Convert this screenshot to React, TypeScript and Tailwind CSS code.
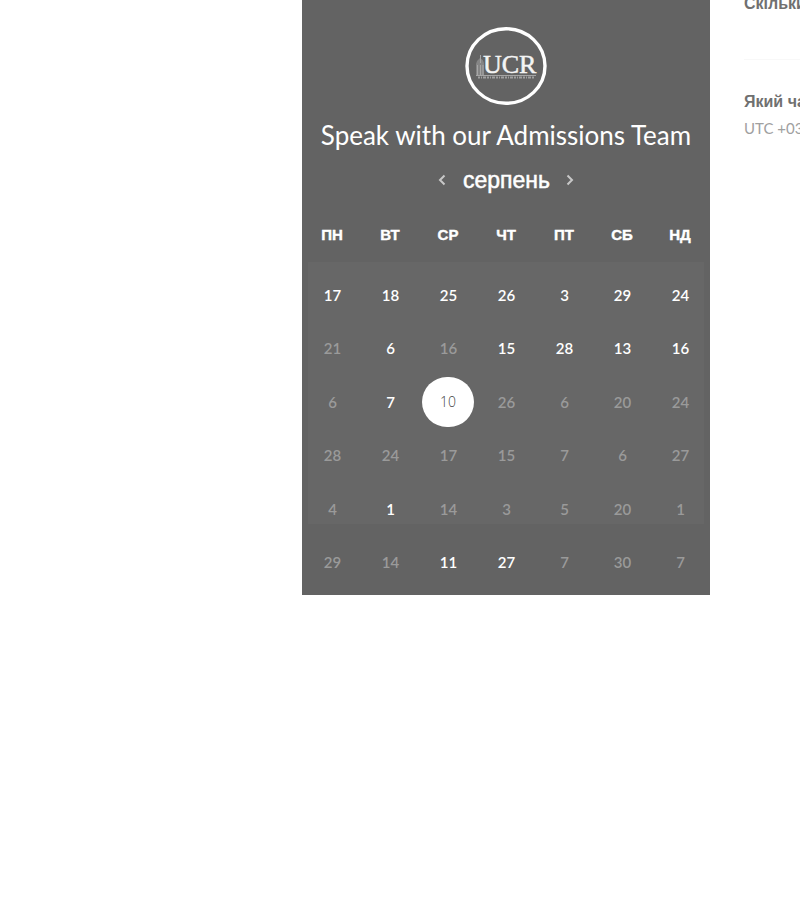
import React from "react";

type Day = { day: number; open?: boolean; selected?: boolean };

const on = (day: number): Day => ({ day, open: true });
const off = (day: number): Day => ({ day });

const weekdays = ["ПН", "ВТ", "СР", "ЧТ", "ПТ", "СБ", "НД"];

const weeks: Day[][] = [
  [on(17), on(18), on(25), on(26), on(3), on(29), on(24)],
  [off(21), on(6), off(16), on(15), on(28), on(13), on(16)],
  [off(6), on(7), { day: 10, selected: true }, off(26), off(6), off(20), off(24)],
  [off(28), off(24), off(17), off(15), off(7), off(6), off(27)],
  [off(4), on(1), off(14), off(3), off(5), off(20), off(1)],
  [off(29), off(14), on(11), on(27), off(7), off(30), off(7)],
];

function Logo() {
  return (
    <svg viewBox="0 0 82 78" className="h-[78px] w-[82px]" role="img" aria-label="UCR">
      <ellipse cx="41" cy="39" rx="39" ry="37.3" fill="none" stroke="#fff" strokeWidth="3.4" />
      <path d="M11 49V37q1-4 4-6 4 2 4 6v12z" fill="#858585" />
      <path d="M15.500 28v8M12.500 38v11M15.500 38v11M18 38v11" fill="none" stroke="#a6a6a6" />
      <text x="18" y="46" fontSize="26" fill="#f4f4f4" stroke="#f4f4f4" strokeWidth="0.5" fontFamily="Liberation Serif, serif">
        UCR
      </text>
      <path d="M11 48.500h60" stroke="#a5a5a5" />
      <path d="M13 50.500h57" stroke="#a0a0a0" strokeWidth="2" strokeDasharray="2 1 1 1 3 1" />
    </svg>
  );
}

function Chevron({ d }: { d: string }) {
  return (
    <svg viewBox="0 0 8 12" className="h-3 w-2" fill="none" stroke="#c8c8c8" strokeWidth="2" aria-hidden="true">
      <path d={d} />
    </svg>
  );
}

function DayButton({ day, open, selected }: Day) {
  if (selected) {
    return (
      <button
        aria-pressed="true"
        className="mx-auto block h-[50px] w-[52px] rounded-full bg-white font-['Open_Sans',sans-serif] text-sm font-light text-[#444]"
      >
        {day}
      </button>
    );
  }
  return (
    <button
      disabled={!open}
      className={
        open
          ? "mx-auto block h-[50px] w-[52px] pl-px font-semibold text-white"
          : "mx-auto block h-[50px] w-[52px] pl-px font-semibold text-[#9a9a9a]"
      }
    >
      {day}
    </button>
  );
}

export default function App() {
  return (
    <main className="grid min-h-screen grid-cols-[1fr_408px_90px] items-start overflow-hidden bg-white font-['Lato',sans-serif]">
      <section className="col-start-2 flex flex-col items-center bg-[#636363] px-px pt-[27px] pb-[6px] text-white">
        <Logo />
        <h1 className="mt-3 text-[26px] leading-9 whitespace-nowrap">Speak with our Admissions Team</h1>
        <div className="mt-3 flex h-[30px] items-center gap-4">
          <button aria-label="Попередній місяць" className="pr-px">
            <Chevron d="M6.500 1.500L2 6l4.500 4.500" />
          </button>
          <h2 className="font-['Liberation_Sans',sans-serif] text-[23px] leading-[30px] [-webkit-text-stroke:0.500px_white]">
            серпень
          </h2>
          <button aria-label="Наступний місяць">
            <Chevron d="M1.500 1.500L6 6l-4.500 4.500" />
          </button>
        </div>
        <table className="mt-[7px] h-[387px] w-full table-fixed bg-[linear-gradient(#676767,#676767)] bg-[size:396px_262px] bg-[position:5px_60px] bg-no-repeat text-center text-[15px]">
          <thead>
            <tr className="h-[66px]">
              {weekdays.map((name) => (
                <th key={name} scope="col" className="p-0 font-['Liberation_Sans',sans-serif] text-[15px] font-bold [-webkit-text-stroke:0.400px_white]">
                  {name}
                </th>
              ))}
            </tr>
          </thead>
          <tbody>
            {weeks.map((week, row) => (
              <tr key={row}>
                {week.map((item, column) => (
                  <td key={column} className="p-0">
                    <DayButton {...item} />
                  </td>
                ))}
              </tr>
            ))}
          </tbody>
        </table>
      </section>
      <aside className="flex flex-col pl-[34px] whitespace-nowrap text-[#707070]">
        <h3 className="-mt-2 h-[67px] font-['Liberation_Sans',sans-serif] text-base leading-6 font-bold">Скільки</h3>
        <hr className="border-[#f8f8f8]" />
        <h3 className="mt-[30px] font-['Liberation_Sans',sans-serif] text-base leading-6 font-bold">Який час</h3>
        <p className="mt-1 text-[15px] leading-5 text-[#a0a0a0]">UTC +03</p>
      </aside>
    </main>
  );
}
